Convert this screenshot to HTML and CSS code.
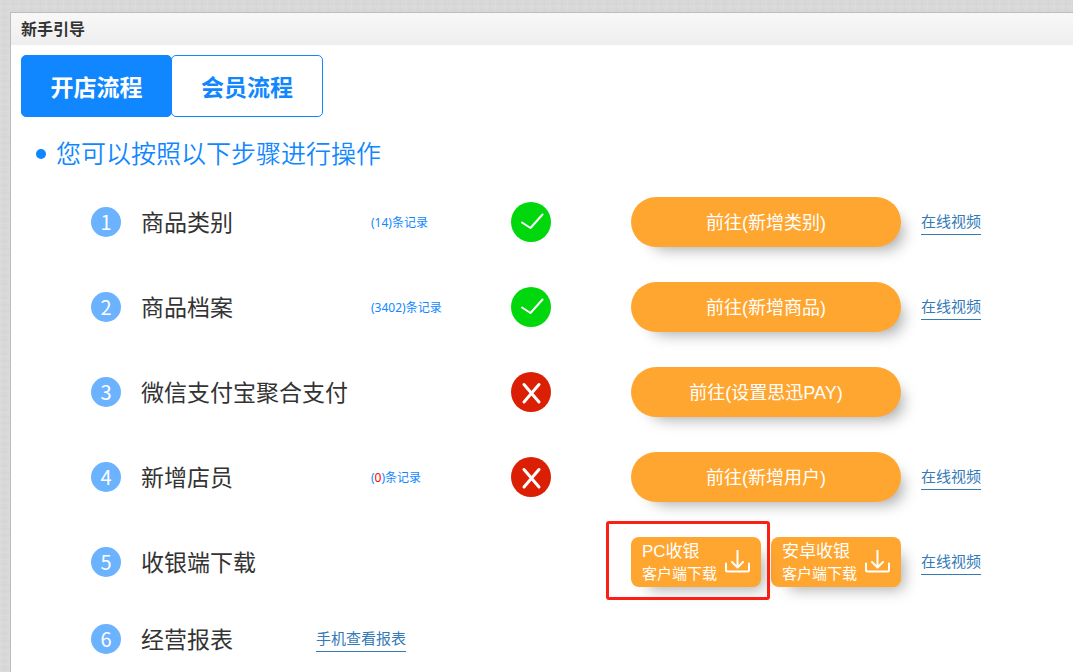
FILE: index.html
```html
<!DOCTYPE html>
<html lang="zh-CN">
<head>
  <meta charset="UTF-8">
  <title>新手引导</title>
  <link rel="stylesheet" href="styles.css">
</head>
<body>
  <svg class="symbols" width="0" height="0">
    <symbol id="icon-ok" viewBox="0 0 40 40">
      <circle cx="20" cy="20" r="20" fill="#00d70d"/>
      <path d="M11 20.5L19.5 26L31.5 12.5" fill="none" stroke="#fff" stroke-width="2" stroke-linecap="round" stroke-linejoin="round"/>
    </symbol>
    <symbol id="icon-no" viewBox="0 0 40 40">
      <circle cx="20" cy="20" r="20" fill="#db1f04"/>
      <path d="M13 12.5L28 30M28 12.5L13 30" fill="none" stroke="#fff" stroke-width="3" stroke-linecap="round"/>
    </symbol>
    <symbol id="icon-download" viewBox="0 0 26 26">
      <path d="M12.500 0.500V17M7 12L12.500 17.500L18 12M1 13.500V20Q1 21.500 2.500 21.500H22.500Q24 21.500 24 20V13.500" fill="none" stroke="#fff" stroke-width="2" stroke-linecap="round" stroke-linejoin="round"/>
    </symbol>
  </svg>

  <div class="panel">
    <h1 class="panel-title">新手引导</h1>
    <div class="panel-body">
      <div class="tabs">
        <button type="button" class="tab active">开店流程</button>
        <button type="button" class="tab">会员流程</button>
      </div>

      <h2 class="tip">您可以按照以下步骤进行操作</h2>

      <ol class="steps">
        <li class="step">
          <span class="num">1</span>
          <span class="name">商品类别</span>
          <span class="record">(14)条记录</span>
          <svg class="status"><use href="#icon-ok"/></svg>
          <button type="button" class="go">前往(新增类别)</button>
          <a class="link" href="#">在线视频</a>
        </li>
        <li class="step">
          <span class="num">2</span>
          <span class="name">商品档案</span>
          <span class="record">(3402)条记录</span>
          <svg class="status"><use href="#icon-ok"/></svg>
          <button type="button" class="go">前往(新增商品)</button>
          <a class="link" href="#">在线视频</a>
        </li>
        <li class="step">
          <span class="num">3</span>
          <span class="name">微信支付宝聚合支付</span>
          <span class="record"></span>
          <svg class="status"><use href="#icon-no"/></svg>
          <button type="button" class="go">前往(设置思迅PAY)</button>
        </li>
        <li class="step">
          <span class="num">4</span>
          <span class="name">新增店员</span>
          <span class="record">(<span class="zero">0</span>)条记录</span>
          <svg class="status"><use href="#icon-no"/></svg>
          <button type="button" class="go">前往(新增用户)</button>
          <a class="link" href="#">在线视频</a>
        </li>
        <li class="step">
          <span class="num">5</span>
          <span class="name">收银端下载</span>
          <div class="downloads">
            <div class="marked">
              <button type="button" class="download">
                <span><span class="big">PC收银</span><span class="small">客户端下载</span></span>
                <svg class="arrow"><use href="#icon-download"/></svg>
              </button>
            </div>
            <button type="button" class="download">
              <span><span class="big">安卓收银</span><span class="small">客户端下载</span></span>
              <svg class="arrow"><use href="#icon-download"/></svg>
            </button>
          </div>
          <a class="link" href="#">在线视频</a>
        </li>
        <li class="step report">
          <span class="num">6</span>
          <span class="name">经营报表</span>
          <a class="link" href="#">手机查看报表</a>
        </li>
      </ol>
    </div>
  </div>
</body>
</html>
```

FILE: styles.css
```css
* {
  box-sizing: border-box;
}
body {
  margin: 0;
  padding: 12px 0 0 10px;
  min-height: 100vh;
  display: flex;
  flex-direction: column;
  font-family: "Liberation Sans", "Noto Sans CJK SC", sans-serif;
  color: #333;
  background-color: #d8d8d8;
  background-image:
    repeating-linear-gradient(0deg, rgba(255,255,255,0.08) 0 1px, transparent 1px 3px, rgba(0,0,0,0.01) 3px 4px, transparent 4px 7px),
    repeating-linear-gradient(90deg, rgba(255,255,255,0.08) 0 1px, transparent 1px 4px, rgba(0,0,0,0.01) 4px 5px, transparent 5px 9px);
}
button {
  font-family: inherit;
  border: 0;
  padding: 0;
  cursor: pointer;
}
.symbols {
  position: absolute;
}
.panel {
  flex: 1;
  background: #fff;
  border-left: 1px solid #bbb;
  border-top: 1px solid #bbb;
}
.panel-title {
  margin: 0;
  padding: 1px 10px 0;
  font-size: 16px;
  line-height: 31px;
  background: linear-gradient(#f8f8f8, #eee);
}
.panel-body {
  padding: 10px 10px 0;
}

/* tabs */
.tabs {
  display: flex;
}
.tab {
  width: 152px;
  height: 62px;
  margin-left: -1px;
  font-size: 23px;
  font-weight: bold;
  color: #1187ff;
  background: #fff;
  border: 1px solid #1187ff;
  border-radius: 5px;
}
.tab.active {
  width: 151px;
  margin-left: 0;
  color: #fff;
  background: #1187ff;
}

.tip {
  display: flex;
  align-items: center;
  gap: 10px;
  margin: 18px 0 24px 15px;
  font-size: 25px;
  font-weight: 350;
  line-height: 38px;
  color: #1187ff;
}
.tip::before {
  content: "";
  width: 10px;
  height: 10px;
  border-radius: 50%;
  background: #1187ff;
}

/* steps */
.steps {
  display: flex;
  flex-direction: column;
  gap: 35px;
  margin: 0;
  padding: 0 0 0 70px;
  list-style: none;
}
.step {
  display: flex;
  align-items: center;
  height: 50px;
}
.num {
  width: 30px;
  margin-right: 20px;
  border-radius: 50%;
  font-family: "Noto Sans CJK SC", sans-serif;
  font-size: 20px;
  line-height: 30px;
  text-align: center;
  color: #fff;
  background: #6bb2ff;
}
.name {
  width: 230px;
  padding-top: 2px;
  font-size: 23px;
  line-height: 34px;
}
.record {
  width: 140px;
  font-family: "Noto Sans", "Noto Sans CJK SC", sans-serif;
  font-size: 12px;
  color: #1187ff;
}
.zero {
  color: #f00;
}
.status {
  width: 40px;
  height: 40px;
  margin-right: 80px;
}
.go {
  width: 270px;
  height: 50px;
  padding-bottom: 2px;
  border-radius: 25px;
  font-size: 18px;
  color: #fff;
  background: #ffa630;
  box-shadow: 10px 10px 15px -8px rgba(0,0,0,0.35);
}
.link {
  margin-left: 20px;
  font-size: 15px;
  line-height: 24px;
  color: #337ab7;
  text-decoration: none;
  border-bottom: 1px solid #337ab7;
}

/* client downloads */
.downloads {
  display: flex;
  gap: 10px;
  margin-left: 260px;
}
.marked {
  position: relative;
}
.marked::after {
  content: "";
  position: absolute;
  inset: -16px -9px -13px -25px;
  border: 3px solid #fb2012;
  border-radius: 3px;
  pointer-events: none;
}
.download {
  display: flex;
  align-items: center;
  justify-content: space-between;
  width: 130px;
  height: 50px;
  padding: 2px 10px 0 11px;
  border-radius: 8px;
  text-align: left;
  color: #fff;
  background: #ffa630;
  box-shadow: 10px 10px 15px -8px rgba(0,0,0,0.35);
}
.big,
.small {
  display: block;
  line-height: 22px;
}
.big {
  font-size: 17px;
}
.small {
  font-size: 15px;
}
.arrow {
  width: 26px;
  height: 26px;
}

.report {
  height: 34px;
}
.report .name {
  width: 155px;
}
```
